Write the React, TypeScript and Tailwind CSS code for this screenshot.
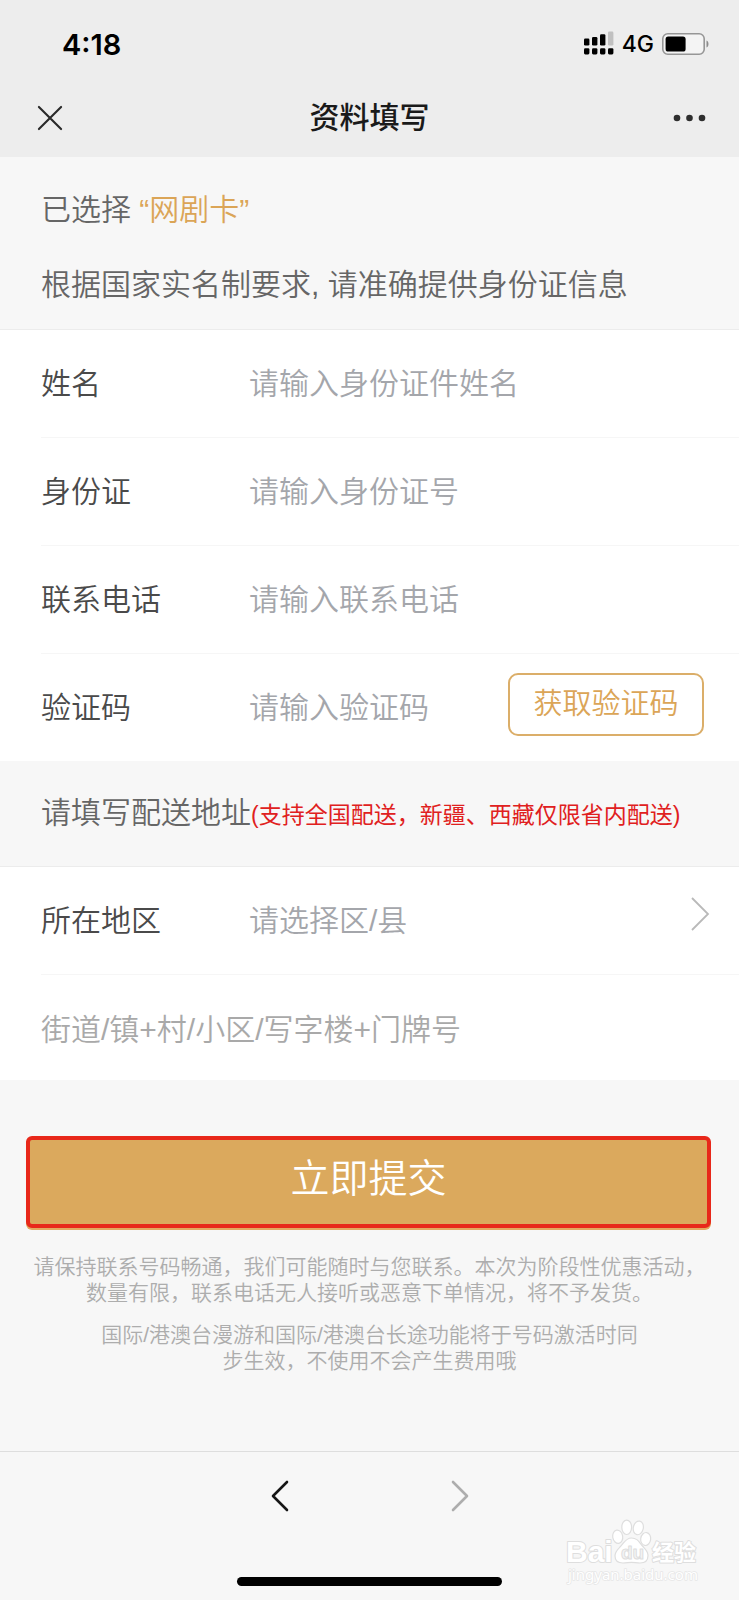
import type { ReactNode } from "react";

type RowProps = {
  id: string;
  label: string;
  placeholder: string;
  type?: string;
  last?: boolean;
  children?: ReactNode;
};

function FieldRow({ id, label, placeholder, type = "text", last = false, children }: RowProps) {
  return (
    <div
      className={
        last
          ? "ml-[41px] flex h-[107px] items-center"
          : "ml-[41px] flex h-[108px] items-center border-b border-[#f6f6f6]"
      }
    >
      <label htmlFor={id} className="w-[208px] shrink-0 text-[#4a4a4a]">
        {label}
      </label>
      <input
        id={id}
        type={type}
        placeholder={placeholder}
        className="h-full min-w-0 flex-1 bg-transparent text-[#4a4a4a] outline-none placeholder:text-[#a4a6ab]"
      />
      {children}
    </div>
  );
}

function StatusBar() {
  return (
    <div className="flex h-[88px] items-center justify-between pr-[29px] pl-[62px] font-['Inter',sans-serif]">
      <span className="text-[29px] leading-none font-semibold text-black">4:18</span>
      <div className="flex items-center gap-2">
        <svg width="30" height="24" viewBox="0 0 30 24" className="-translate-y-px" aria-hidden="true">
          <g fill="#000">
            <rect x="0" y="7.5" width="5.4" height="7" rx="1.3" />
            <rect x="8" y="6" width="5.4" height="8.5" rx="1.3" />
            <rect x="16" y="3.3" width="5.4" height="11.2" rx="1.3" />
            <rect x="0" y="17.2" width="5.4" height="6.2" rx="1.3" />
            <rect x="8" y="17.2" width="5.4" height="6.2" rx="1.3" />
            <rect x="16" y="17.2" width="5.4" height="6.2" rx="1.3" />
            <rect x="24" y="17.2" width="5.4" height="6.2" rx="1.3" />
          </g>
          <rect x="24" y="0.6" width="5.4" height="14" rx="1.3" fill="#c0c0c0" />
        </svg>
        <span className="text-[23px] leading-none font-medium text-black">4G</span>
        <svg width="48" height="22" viewBox="0 0 48 22" aria-hidden="true">
          <rect x="0.8" y="0.8" width="41.4" height="20.4" rx="5" fill="#f4f4f4" stroke="#969696" strokeWidth="1.6" />
          <rect x="3.6" y="3.6" width="20" height="15" rx="2.6" fill="#000" />
          <path d="M44.500 7.500c2.600.8 2.600 6.200 0 7z" fill="#8c8c8c" />
        </svg>
      </div>
    </div>
  );
}

function Watermark() {
  return (
    <svg
      width="140"
      height="68"
      viewBox="0 0 140 68"
      className="pointer-events-none absolute right-[34px] bottom-[14px]"
      aria-hidden="true"
    >
      <g fill="#fff" stroke="#dedede" strokeWidth="1.2" strokeLinejoin="round">
        <ellipse cx="52.700" cy="18.700" rx="5" ry="6.700" transform="rotate(-10 52.700 18.700)" />
        <ellipse cx="61.700" cy="9.300" rx="4.900" ry="7.200" />
        <ellipse cx="73.300" cy="9.900" rx="5" ry="6.900" transform="rotate(12 73.300 9.900)" />
        <ellipse cx="80.700" cy="21" rx="5" ry="6.500" transform="rotate(8 80.700 21)" />
        <path d="M66.500 20c-6 0-7.500 5-11 8.500-3 3-5.500 5-5.500 9.500 0 5 3.500 7 8 7 3.500 0 5.500-.6 8.500-.6s5 .6 8.500.6c4.500 0 8-2 8-7.500 0-4.500-3-6.500-5.500-9.500-3.500-4-5-8-11-8z" />
        <text x="1" y="44" fontSize="30" fontWeight="700" fontFamily="Liberation Sans, sans-serif" paintOrder="stroke" strokeWidth="2">
          Bai
        </text>
        <text x="56" y="41" fontSize="19" fontWeight="700" fontFamily="Liberation Sans, sans-serif" fill="#f4f4f4" strokeWidth="1">
          du
        </text>
        <text x="87" y="42" fontSize="22" fontWeight="700" fontFamily="Noto Sans CJK SC, sans-serif" paintOrder="stroke" strokeWidth="2">
          经验
        </text>
        <text x="3" y="62" fontSize="15" fontWeight="400" fontFamily="Noto Sans, sans-serif" paintOrder="stroke" stroke="#e6e6e6" strokeWidth="1.500">
          jingyan.baidu.com
        </text>
      </g>
    </svg>
  );
}

export default function App() {
  return (
    <div
      lang="zh-CN"
      className="flex min-h-screen flex-col bg-[#f7f7f7] font-['Liberation_Sans','Noto_Sans_CJK_SC',sans-serif] text-[30px] font-[350]"
    >
      <header className="bg-[#ededed] pb-[9px]">
        <StatusBar />
        <div className="grid h-[60px] grid-cols-[1fr_auto_1fr] items-center px-[33px]">
          <button type="button" aria-label="关闭" className="justify-self-start p-1">
            <svg width="26" height="26" viewBox="0 0 27 27" fill="none" stroke="#2a2a2a" strokeWidth="2.200" strokeLinecap="round">
              <path d="M2 2l23 23M25 2L2 25" />
            </svg>
          </button>
          <h1 className="text-[30px] leading-none font-medium text-[#1a1a1a]">资料填写</h1>
          <button type="button" aria-label="更多" className="justify-self-end">
            <svg width="33" height="8" viewBox="0 0 33 8" fill="#2e2e2e">
              <circle cx="4" cy="4" r="3.300" />
              <circle cx="16.500" cy="4" r="3.300" />
              <circle cx="29" cy="4" r="3.300" />
            </svg>
          </button>
        </div>
      </header>

      <form className="flex flex-col" onSubmit={(e) => e.preventDefault()}>
        <div className="border-b border-[#ececec] px-[41px] pt-[15px] pb-[7px] leading-[75px] text-[#666]">
          <p>
            已选择 <span className="text-[#dba557]">“网剧卡”</span>
          </p>
          <p>根据国家实名制要求, 请准确提供身份证信息</p>
        </div>

        <div className="bg-white">
          <FieldRow id="name" label="姓名" placeholder="请输入身份证件姓名" />
          <FieldRow id="idcard" label="身份证" placeholder="请输入身份证号" />
          <FieldRow id="phone" label="联系电话" type="tel" placeholder="请输入联系电话" />
          <FieldRow id="code" label="验证码" placeholder="请输入验证码" last>
            <button
              type="button"
              className="mt-[19px] mr-[35px] h-[63px] w-[196px] shrink-0 self-start rounded-[10px] border-2 border-[#dbae69] pb-px text-[29px] leading-none text-[#dba557]"
            >
              获取验证码
            </button>
          </FieldRow>
        </div>

        <div className="flex h-[106px] items-baseline border-b border-[#ececec] pl-[41px] leading-[104px] whitespace-nowrap text-[#666]">
          <span>请填写配送地址</span>
          <span className="text-[23px] font-normal text-[#e02020]">(支持全国配送，新疆、西藏仅限省内配送)</span>
        </div>

        <div className="bg-white">
          <div className="ml-[41px] flex h-[108px] items-center border-b border-[#f6f6f6]">
            <label htmlFor="region" className="w-[208px] shrink-0 text-[#4a4a4a]">
              所在地区
            </label>
            <select
              id="region"
              defaultValue=""
              className="h-full min-w-0 flex-1 appearance-none bg-transparent text-[#a4a6ab] outline-none"
            >
              <option value="">请选择区/县</option>
            </select>
            <svg
              width="20"
              height="36"
              viewBox="0 0 20 36"
              fill="none"
              stroke="#b9b9b9"
              strokeWidth="1.800"
              className="mr-[29px] mb-[14px] shrink-0"
              aria-hidden="true"
            >
              <path d="M2 2l16 16L2 34" />
            </svg>
          </div>
          <div className="ml-[41px] flex h-[105px] items-center pt-1">
            <input
              aria-label="详细地址"
              type="text"
              placeholder="街道/镇+村/小区/写字楼+门牌号"
              className="h-full min-w-0 flex-1 bg-transparent text-[#4a4a4a] outline-none placeholder:text-[#a9a9a9]"
            />
          </div>
        </div>

        <button
          type="submit"
          className="mr-7 ml-[26px] mt-14 h-[92px] rounded-md border-4 border-[#e8281a] bg-[#dba95d] pb-2 text-[39px] leading-none text-white shadow-[0_2px_0_#e3a860]"
        >
          立即提交
        </button>
      </form>

      <div className="flex flex-col gap-4 px-[27px] pt-[26px] text-center text-[21px] leading-[26px] text-[#adadad]">
        <p>
          请保持联系号码畅通，我们可能随时与您联系。本次为阶段性优惠活动，
          <br />
          数量有限，联系电话无人接听或恶意下单情况，将不予发货。
        </p>
        <p>
          国际/港澳台漫游和国际/港澳台长途功能将于号码激活时同
          <br />
          步生效，不使用不会产生费用哦
        </p>
      </div>

      <footer className="relative mt-auto flex h-[149px] flex-col items-center justify-between border-t border-[#dedede] pt-7 pb-[14px]">
        <nav className="flex gap-[162px]">
          <button type="button" aria-label="后退">
            <svg width="18" height="32" viewBox="0 0 18 32" fill="none" stroke="#161616" strokeWidth="2.600" strokeLinecap="round" strokeLinejoin="round">
              <path d="M16 2L2 16l14 14" />
            </svg>
          </button>
          <button type="button" aria-label="前进">
            <svg width="18" height="32" viewBox="0 0 18 32" fill="none" stroke="#adadad" strokeWidth="2.600" strokeLinecap="round" strokeLinejoin="round">
              <path d="M2 2l14 14L2 30" />
            </svg>
          </button>
        </nav>
        <div className="h-[9px] w-[265px] rounded-full bg-black" />
        <Watermark />
      </footer>
    </div>
  );
}
